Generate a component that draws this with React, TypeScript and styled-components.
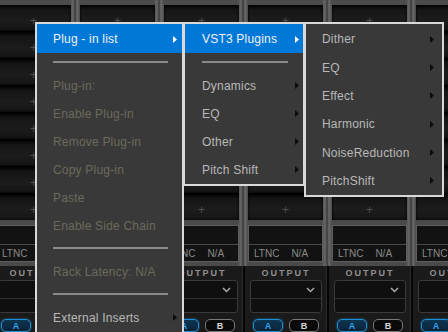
import React from 'react';
import styled, { createGlobalStyle } from 'styled-components';

const Global = createGlobalStyle`
  html, body { margin: 0; padding: 0; background: #161616; }
  body { width: 448px; height: 332px; overflow: hidden; font-family: "Liberation Sans", Arial, sans-serif; }
`;

const Page = styled.div`
  position: relative;
  width: 448px;
  height: 332px;
  overflow: hidden;
  background: #181818;
`;

const Rack = styled.div`
  display: flex;
  margin-left: -9px;
  height: 100%;
`;

const Strip = styled.div`
  flex: 0 0 84px;
  display: flex;
  flex-direction: column;
  height: 100%;
`;

const Upper = styled.div`
  display: flex;
  flex-direction: column;
  gap: 5px;
  padding: 5px 4px 4px 5px;
  background: linear-gradient(90deg, #3a3a3a 0, #6a6a6a 2px, #4a4a4a 5px, #4a4a4a 79px, #6a6a6a 82px, #3a3a3a 84px);
`;

const SlotList = styled.div`
  display: flex;
  flex-direction: column;
  gap: 1px;
  background: #000;
`;

const Slot = styled.div`
  height: 26px;
  display: flex;
  align-items: center;
  justify-content: center;
  padding-top: 4px;
  box-sizing: border-box;
  background: linear-gradient(180deg, #050505 0, #151515 5px, #1c1c1c 60%, #141414 100%);
  box-shadow: inset 0 0 3px #000;
  color: #4c4c4c;
  font-size: 13px;
  font-weight: 300;
`;

const InfoBox = styled.div`
  height: 37px;
  display: grid;
  grid-template-rows: 18px 1fr;
  background: #121212;
  border: 1px solid #5e5e5e;
  box-sizing: border-box;
`;

const InfoRow = styled.div`
  display: flex;
  align-items: center;
  gap: 12px;
  padding: 0 5px;
  color: #8a8a8a;
  font-size: 10px;
  & + & { border-top: 1px solid #4a4a4a; }
`;

const Lower = styled.div`
  flex: 1;
  display: flex;
  flex-direction: column;
  align-items: stretch;
  padding: 0 4px 0 5px;
  background: #1a1a1a;
  border-left: 2px solid #050505;
  border-right: 1px solid #2a2a2a;
`;

const OutLabel = styled.div`
  height: 13px;
  line-height: 13px;
  text-align: center;
  color: #8f8f8f;
  font-size: 9px;
  font-weight: bold;
  letter-spacing: 2px;
  padding-top: 1px;
`;

const Dropdown = styled.div`
  height: 31px;
  display: grid;
  grid-template-rows: 18px 1fr;
  border: 1px solid #3a3a3a;
  border-radius: 3px;
  background: #0f0f0f;
`;

const DropTop = styled.div`
  display: flex;
  align-items: center;
  justify-content: flex-end;
  padding-right: 6px;
  border-bottom: 1px solid #303030;
  color: #a0a0a0;
`;

const ButtonRow = styled.div`
  display: flex;
  gap: 6px;
  padding: 6px 0 0 3px;
`;

const AB = styled.div<{ $on?: boolean }>`
  width: 30px;
  height: 13px;
  box-sizing: border-box;
  border-radius: 5px;
  display: flex;
  align-items: center;
  justify-content: center;
  font-size: 9px;
  font-weight: bold;
  border: 1px solid ${p => (p.$on ? '#1e8fd4' : '#7a7a7a')};
  background: ${p => (p.$on ? 'linear-gradient(180deg,#0d3552,#0a2336)' : '#0a0a0a')};
  color: ${p => (p.$on ? '#2aa6ee' : '#d8d8d8')};
  box-shadow: ${p => (p.$on ? '0 0 2px #1e8fd4' : 'none')};
`;

const Menu = styled.div<{ $left: number; $top: number; $width: number }>`
  position: absolute;
  left: ${p => p.$left}px;
  top: ${p => p.$top}px;
  width: ${p => p.$width}px;
  box-sizing: border-box;
  background: #393939;
  border: 2px solid #d9d9d9;
  padding: 0 0 1px;
`;

const Item = styled.div<{ $active?: boolean; $disabled?: boolean; $padL: number; $padR: number; $h: number }>`
  height: ${p => p.$h}px;
  display: flex;
  align-items: center;
  justify-content: space-between;
  padding: 1px ${p => p.$padR}px 0 ${p => p.$padL}px;
  box-sizing: border-box;
  background: ${p => (p.$active ? '#0078d7' : 'transparent')};
  color: ${p => (p.$active ? '#f2f2f2' : p.$disabled ? '#6c6a5c' : '#b8b8b8')};
  font-size: 12px;
  letter-spacing: 0.2px;
  white-space: nowrap;
`;

const ArrowIcon = styled.svg`
  flex: 0 0 auto;
  display: block;
`;

const Arrow = ({ light }: { light?: boolean }) => (
  <ArrowIcon width="4" height="7" viewBox="0 0 4 7">
    <path d="M0 0 L4 3.5 L0 7 Z" fill={light ? '#ffffff' : '#0c0c0c'} />
  </ArrowIcon>
);

const Sep = styled.div<{ $l: number; $r: number }>`
  height: 18px;
  display: flex;
  align-items: center;
  padding: 0 ${p => p.$r}px 0 ${p => p.$l}px;
  &::after {
    content: '';
    flex: 1;
    height: 2px;
    background: #8a8a8a;
  }
`;

type Entry = { label?: string; sep?: boolean; active?: boolean; disabled?: boolean; arrow?: boolean };

const menu1: Entry[] = [
  { label: 'Plug - in list', active: true, arrow: true },
  { sep: true },
  { label: 'Plug-in:', disabled: true },
  { label: 'Enable Plug-in', disabled: true },
  { label: 'Remove Plug-in', disabled: true },
  { label: 'Copy Plug-in', disabled: true },
  { label: 'Paste', disabled: true },
  { label: 'Enable Side Chain', disabled: true },
  { sep: true },
  { label: 'Rack Latency: N/A', disabled: true },
  { sep: true },
  { label: 'External Inserts', arrow: true },
];

const menu2: Entry[] = [
  { label: 'VST3 Plugins', active: true, arrow: true },
  { sep: true },
  { label: 'Dynamics', arrow: true },
  { label: 'EQ', arrow: true },
  { label: 'Other', arrow: true },
  { label: 'Pitch Shift', arrow: true },
];

const menu3: Entry[] = [
  { label: 'Dither', arrow: true },
  { label: 'EQ', arrow: true },
  { label: 'Effect', arrow: true },
  { label: 'Harmonic', arrow: true },
  { label: 'NoiseReduction', arrow: true },
  { label: 'PitchShift', arrow: true },
];

function MenuList({ entries, left, top, width, padL, padR, sepL, sepR, firstH, h }: {
  entries: Entry[]; left: number; top: number; width: number; padL: number; padR: number; sepL: number; sepR: number; firstH: number; h: number;
}) {
  return (
    <Menu $left={left} $top={top} $width={width}>
      {entries.map((e, i) =>
        e.sep ? (
          <Sep key={i} $l={sepL} $r={sepR} />
        ) : (
          <Item key={i} $active={e.active} $disabled={e.disabled} $padL={padL} $padR={padR} $h={i === 0 ? firstH : h}>
            <span>{e.label}</span>
            {e.arrow && <Arrow light={e.active} />}
          </Item>
        )
      )}
    </Menu>
  );
}

const Chevron = () => (
  <svg width="9" height="6" viewBox="0 0 9 6">
    <path d="M1 1 L4.5 4.5 L8 1" fill="none" stroke="#a8a8a8" strokeWidth="1.5" />
  </svg>
);

export default function App() {
  const strips = Array.from({ length: 6 });
  return (
    <>
      <Global />
      <Page>
        <Rack>
          {strips.map((_, s) => (
            <Strip key={s}>
              <Upper>
                <SlotList>
                  {Array.from({ length: 8 }).map((__, i) => (
                    <Slot key={i}>+</Slot>
                  ))}
                </SlotList>
                <InfoBox>
                  <InfoRow />
                  <InfoRow>
                    <span>LTNC</span>
                    <span>N/A</span>
                  </InfoRow>
                </InfoBox>
              </Upper>
              <Lower>
                <OutLabel>OUTPUT</OutLabel>
                <Dropdown>
                  <DropTop>
                    <Chevron />
                  </DropTop>
                  <div />
                </Dropdown>
                <ButtonRow>
                  <AB $on>A</AB>
                  <AB>B</AB>
                </ButtonRow>
              </Lower>
            </Strip>
          ))}
        </Rack>
        <MenuList entries={menu1} left={35} top={22} width={149} padL={16} padR={5} sepL={16} sepR={14} firstH={29} h={28} />
        <MenuList entries={menu2} left={183} top={22} width={122} padL={17} padR={4} sepL={17} sepR={15} firstH={29} h={28} />
        <MenuList entries={menu3} left={304} top={22} width={140} padL={16} padR={8} sepL={16} sepR={14} firstH={29} h={28.3} />
      </Page>
    </>
  );
}
